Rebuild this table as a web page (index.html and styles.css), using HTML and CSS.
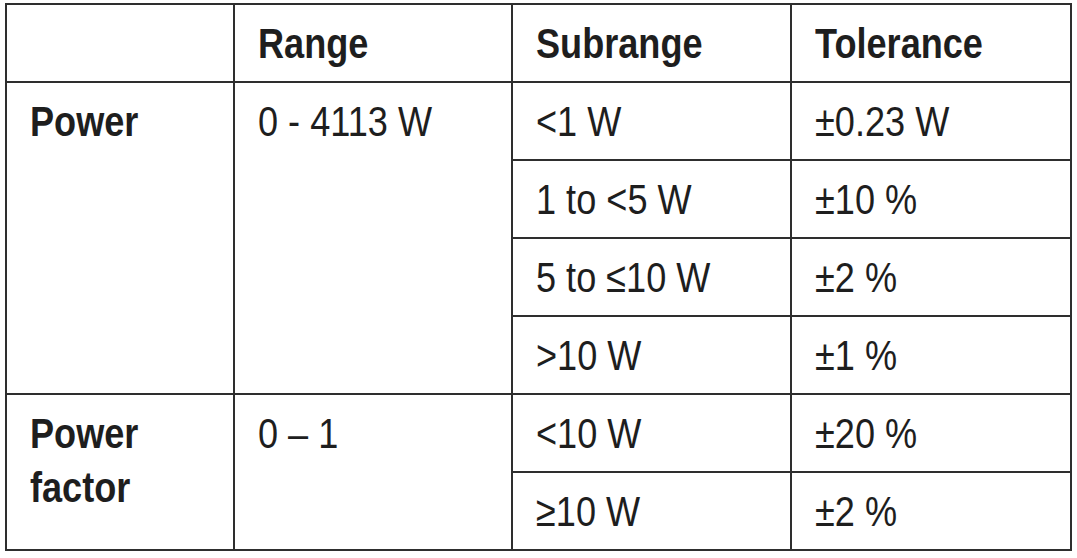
FILE: index.html
```html
<!DOCTYPE html>
<html>
<head>
<meta charset="utf-8">
<link rel="stylesheet" href="styles.css">
</head>
<body>
<table class="spec">
  <colgroup>
    <col class="c1"><col class="c2"><col class="c3"><col class="c4">
  </colgroup>
  <tr class="head">
    <th></th><th><span class="t">Range</span></th><th><span class="t">Subrange</span></th><th><span class="t">Tolerance</span></th>
  </tr>
  <tr>
    <th class="rowhead" rowspan="4"><span class="t">Power</span></th>
    <td rowspan="4" class="top"><span class="t">0 - 4113 W</span></td>
    <td><span class="t">&lt;1 W</span></td><td><span class="t">±0.23 W</span></td>
  </tr>
  <tr><td><span class="t">1 to &lt;5 W</span></td><td><span class="t">±10 %</span></td></tr>
  <tr><td><span class="t">5 to ≤10 W</span></td><td><span class="t">±2 %</span></td></tr>
  <tr><td><span class="t">&gt;10 W</span></td><td><span class="t">±1 %</span></td></tr>
  <tr>
    <th class="rowhead" rowspan="2"><span class="t">Power<br>factor</span></th>
    <td rowspan="2" class="top"><span class="t">0 – 1</span></td>
    <td><span class="t">&lt;10 W</span></td><td><span class="t">±20 %</span></td>
  </tr>
  <tr><td><span class="t">≥10 W</span></td><td><span class="t">±2 %</span></td></tr>
</table>
</body>
</html>
```
FILE: styles.css
```css
html, body {
  margin: 0;
  padding: 0;
  background: #ffffff;
}
.spec {
  border-collapse: collapse;
  margin: 3px 0 0 5px;
  font-family: "Liberation Sans", Arial, sans-serif;
  font-size: 43px;
  line-height: 54px;
  color: #1e1e1e;
  table-layout: fixed;
  width: 1065px;
}
.c1 { width: 228px; }
.c2 { width: 278px; }
.c3 { width: 279px; }
.c4 { width: 280px; }
.spec tr { height: 78px; }
.spec th, .spec td {
  border: 2px solid #2e2e2e;
  padding: 0 0 0 23px;
  text-align: left;
  vertical-align: middle;
  font-weight: normal;
  white-space: nowrap;
}
.spec th {
  font-weight: bold;
}
.spec .rowhead, .spec .top {
  vertical-align: top;
  padding-top: 11px;
}
.t {
  display: inline-block;
  transform: scaleX(0.84);
  transform-origin: left center;
}
```
